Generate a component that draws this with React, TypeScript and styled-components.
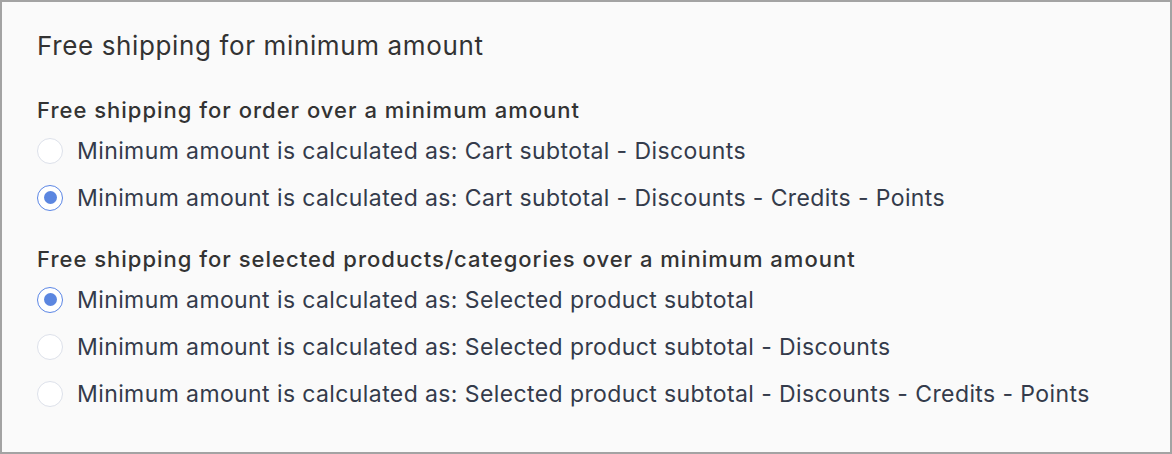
import React from "react";
import styled, { createGlobalStyle } from "styled-components";

const Global = createGlobalStyle`
  html, body { margin: 0; padding: 0; background: #fafafa; }
  body { font-family: Inter, "Noto Sans", sans-serif; -webkit-font-smoothing: antialiased; }
  * { box-sizing: border-box; }
`;

const Panel = styled.div`
  width: 1172px;
  height: 454px;
  border: 2px solid #a3a3a3;
  background: #fafafa;
  padding: 28px 35px 0 35px;
  display: flex;
  flex-direction: column;
`;

const Title = styled.h2`
  margin: 0;
  font-size: 26px;
  font-weight: 400;
  letter-spacing: 0.63px;
  color: #333333;
  line-height: 32px;
`;

const Section = styled.div<{ $top: number }>`
  margin-top: ${(p) => p.$top}px;
  display: flex;
  flex-direction: column;
`;

const SectionHeading = styled.div`
  font-size: 22px;
  font-weight: 500;
  letter-spacing: 1px;
  color: #333333;
  line-height: 28px;
  margin-bottom: 3px;
`;

const Option = styled.label`
  display: flex;
  align-items: center;
  gap: 14px;
  height: 47px;
  font-size: 23px;
  letter-spacing: 0.4px;
  color: #343b4b;
  cursor: pointer;
`;

const Radio = styled.span<{ $checked: boolean }>`
  width: 26px;
  height: 26px;
  border-radius: 50%;
  flex-shrink: 0;
  background: #ffffff;
  border: 1px solid ${(p) => (p.$checked ? "#5b86e5" : "#dde1ea")};
  display: flex;
  align-items: center;
  justify-content: center;
  &::after {
    content: "";
    width: 13px;
    height: 13px;
    border-radius: 50%;
    background: ${(p) => (p.$checked ? "#5b86e0" : "transparent")};
  }
`;

type Opt = { label: string; checked: boolean };

const sections: { heading: string; top: number; options: Opt[] }[] = [
  {
    heading: "Free shipping for order over a minimum amount",
    top: 34,
    options: [
      { label: "Minimum amount is calculated as: Cart subtotal - Discounts", checked: false },
      { label: "Minimum amount is calculated as: Cart subtotal - Discounts - Credits - Points", checked: true },
    ],
  },
  {
    heading: "Free shipping for selected products/categories over a minimum amount",
    top: 24,
    options: [
      { label: "Minimum amount is calculated as: Selected product subtotal", checked: true },
      { label: "Minimum amount is calculated as: Selected product subtotal - Discounts", checked: false },
      {
        label: "Minimum amount is calculated as: Selected product subtotal - Discounts - Credits - Points",
        checked: false,
      },
    ],
  },
];

export default function App() {
  return (
    <>
      <Global />
      <Panel>
        <Title>Free shipping for minimum amount</Title>
        {sections.map((s) => (
          <Section key={s.heading} $top={s.top}>
            <SectionHeading>{s.heading}</SectionHeading>
            {s.options.map((o) => (
              <Option key={o.label}>
                <Radio $checked={o.checked} />
                {o.label}
              </Option>
            ))}
          </Section>
        ))}
      </Panel>
    </>
  );
}
